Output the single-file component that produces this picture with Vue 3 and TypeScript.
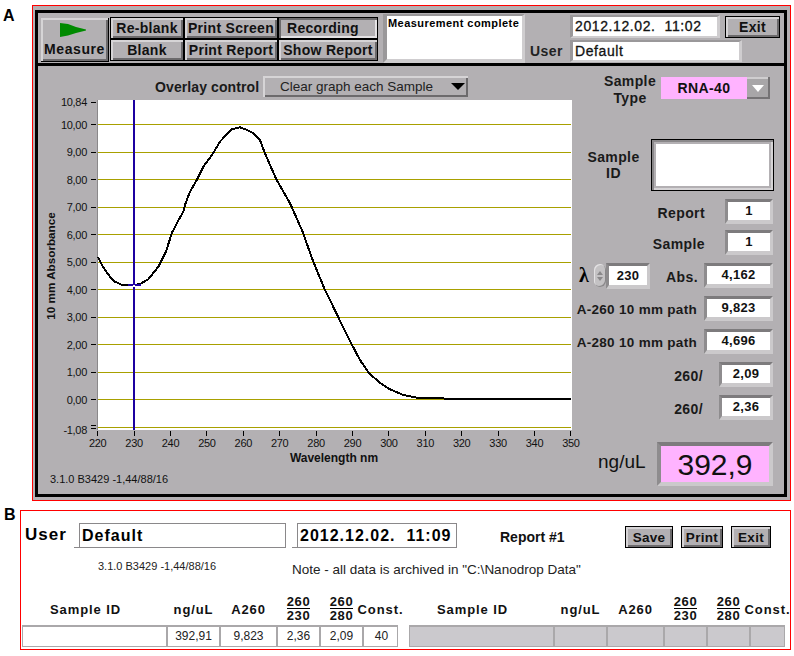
<script setup lang="ts">
import { computed } from 'vue'

// wavelength/absorbance trace, read off in page pixels
const curve: number[][] = [
  [98, 257], [102, 265], [106.7, 272.3], [111, 278], [115, 281.7], [121.7, 284.7], [133.3, 285.3], [140, 284],
  [148.3, 279.3], [158.3, 266.7], [166, 251.7], [171.7, 233.3], [178, 221], [183.3, 211.7], [185, 205], [190, 191.7],
  [196.7, 180], [203.3, 166.7], [212, 155], [220, 141.7], [226, 135], [231.7, 129.3], [240, 127.3], [247, 130],
  [253.3, 133.3], [260, 140], [265, 153.3], [270, 165], [276.7, 180], [283, 191], [290, 203.3], [297, 219],
  [303.3, 233.3], [308, 247], [313.3, 261.7], [320, 278], [325, 290], [331, 302], [338.3, 317.3], [345, 331],
  [351.7, 344.3], [360, 360], [368.3, 372.3], [376.7, 380], [383, 385], [390, 389.3], [403.3, 395], [416.7, 397.7],
  [450, 398.7], [571, 399],
]
const curvePoints = computed(() => curve.map(p => p.join(',')).join(' '))

const yAxis = [
  { y: 102, label: '10,84', tick: 102 },
  { y: 125, label: '10,00', tick: 124.5 },
  { y: 152, label: '9,00', tick: 152 },
  { y: 180, label: '8,00', tick: 179.5 },
  { y: 207, label: '7,00', tick: 207 },
  { y: 235, label: '6,00', tick: 234.5 },
  { y: 262, label: '5,00', tick: 262 },
  { y: 290, label: '4,00', tick: 289.5 },
  { y: 317, label: '3,00', tick: 317 },
  { y: 345, label: '2,00', tick: 344.5 },
  { y: 372, label: '1,00', tick: 372 },
  { y: 400, label: '0,00', tick: 399.5 },
  { y: 430, label: '-1,08', tick: 428 },
]
const gridLines = [124.5, 152, 179.5, 207, 234.5, 262, 289.5, 317, 344.5, 372, 399.5, 427.5]
const xAxis = Array.from({ length: 14 }, (_, i) => ({ x: 97.7 + i * 36.4, label: String(220 + i * 10) }))

const columns = ['Sample ID', 'ng/uL', 'A260', '260/230', '260/280', 'Const.']
const values = ['', '392,91', '9,823', '2,36', '2,09', '40']
</script>

<template>
  <div class="page">
    <div class="row-a">
      <div class="letter">A</div>
      <section class="panel-a">
        <div class="frame">
          <div class="toolbar">
            <button class="btn measure">
              <svg width="28" height="15" viewBox="0 0 28 15">
                <polygon points="0,0 8,1 16,4 26,6.5 26,7.5 16,10 8,12.500 0,14" fill="#008a00" />
              </svg>
              <span>Measure</span>
            </button>
            <div class="btn-grid">
              <button class="btn">Re-blank</button>
              <button class="btn">Print Screen</button>
              <button class="btn pressed">Recording</button>
              <button class="btn">Blank</button>
              <button class="btn">Print Report</button>
              <button class="btn">Show Report</button>
            </div>
            <div class="message"><span>Measurement complete</span></div>
            <div class="user-label">User</div>
            <div class="user-col">
              <div class="date-line">
                <div class="text-box date-box">2012.12.02.&nbsp; 11:02</div>
                <button class="btn exit">Exit</button>
              </div>
              <div class="text-box user-box">Default</div>
            </div>
          </div>

          <div class="main">
            <div class="left">
              <div class="overlay">
                <span class="label">Overlay control</span>
                <div class="dropdown">
                  <span>Clear graph each Sample</span>
                  <i class="arrow"></i>
                </div>
              </div>
              <svg class="chart" width="538" height="394" viewBox="38 100 538 394">
                <rect x="97" y="100" width="475" height="330" fill="#fff" />
                <line x1="97" y1="100" x2="97" y2="430" stroke="#8a888a" stroke-width="1" shape-rendering="crispEdges" />
                <line
                  v-for="g in gridLines"
                  :key="g"
                  x1="98"
                  :y1="g"
                  x2="571"
                  :y2="g"
                  stroke="#a8a000"
                  stroke-width="1"
                  shape-rendering="crispEdges"
                />
                <line x1="134" y1="100" x2="134" y2="430" stroke="#1c00a0" stroke-width="2" shape-rendering="crispEdges" />
                <polyline :points="curvePoints" fill="none" stroke="#000" stroke-width="2" stroke-linejoin="round" shape-rendering="crispEdges" />
                <line x1="128" y1="285" x2="141" y2="285" stroke="#1c00a0" stroke-width="2" shape-rendering="crispEdges" />
                <rect x="133" y="285" width="2" height="2" fill="#fff" />
                <g v-for="t in yAxis" :key="t.label">
                  <text class="tick-text" x="87" :y="t.y + 4" text-anchor="end">{{ t.label }}</text>
                  <line x1="91" :y1="t.tick" x2="96" :y2="t.tick" stroke="#000" stroke-width="1" shape-rendering="crispEdges" />
                </g>
                <line x1="91" y1="425.500" x2="96" y2="425.500" stroke="#000" stroke-width="1" shape-rendering="crispEdges" />
                <g v-for="t in xAxis" :key="t.label">
                  <line :x1="t.x" y1="431" :x2="t.x" y2="436" stroke="#000" stroke-width="1" shape-rendering="crispEdges" />
                  <text class="tick-text" :x="t.x" y="447" text-anchor="middle">{{ t.label }}</text>
                </g>
                <text class="axis-title x-title" x="334" y="462" text-anchor="middle">Wavelength nm</text>
                <text class="axis-title" transform="translate(55 266) rotate(-90)" text-anchor="middle">10 mm Absorbance</text>
                <text class="version" x="50" y="483">3.1.0 B3429 -1,44/88/16</text>
              </svg>
            </div>

            <div class="right">
              <div class="type-row">
                <div class="label type-label">Sample<br />Type</div>
                <div class="ring">
                  <span class="ring-value">RNA-40</span>
                  <span class="ring-arrow"><i></i></span>
                </div>
              </div>

              <div class="id-row">
                <div class="label id-label">Sample<br />ID</div>
                <div class="id-box"><div></div></div>
              </div>

              <div class="rows">
                <div class="ind-row report-row">
                  <span class="label gap-20">Report</span>
                  <div class="ind w-48">1</div>
                </div>
                <div class="ind-row">
                  <span class="label gap-20">Sample</span>
                  <div class="ind w-48">1</div>
                </div>
                <div class="ind-row lambda-row">
                  <div class="lambda">
                    <span class="lambda-sign">λ</span>
                    <div class="spinner">
                      <i class="up"></i>
                      <i class="down"></i>
                    </div>
                    <div class="ind w-44 low">230</div>
                  </div>
                  <span class="label gap-6">Abs.</span>
                  <div class="ind w-69">4,162</div>
                </div>
                <div class="ind-row">
                  <span class="label gap-7 wide">A-260 10 mm path</span>
                  <div class="ind w-69">9,823</div>
                </div>
                <div class="ind-row">
                  <span class="label gap-7 wide">A-280 10 mm path</span>
                  <div class="ind w-69">4,696</div>
                </div>
                <div class="ind-row">
                  <span class="label gap-16">260/</span>
                  <div class="ind w-54">2,09</div>
                </div>
                <div class="ind-row">
                  <span class="label gap-16">260/</span>
                  <div class="ind w-54">2,36</div>
                </div>
              </div>

              <div class="conc-row">
                <span class="conc-label">ng/uL</span>
                <div class="conc">392,9</div>
              </div>
            </div>
          </div>
        </div>
      </section>
    </div>

    <div class="row-b">
      <div class="letter-b">B</div>
      <section class="panel-b">
        <div class="report-top">
          <span class="report-user">User</span>
          <div class="field user-field"><div>Default</div></div>
          <div class="field date-field"><div>2012.12.02.&nbsp; 11:09</div></div>
          <span class="report-no">Report #1</span>
          <div class="report-btns">
            <button class="btn small save">Save</button>
            <button class="btn small print">Print</button>
            <button class="btn small close">Exit</button>
          </div>
        </div>
        <div class="notes">
          <span class="note-version">3.1.0 B3429 -1,44/88/16</span>
          <span class="note">Note - all data is archived in "C:\Nanodrop Data"</span>
        </div>
        <div class="tables">
          <div v-for="side in ['left', 'right']" :key="side" class="report-table">
            <div class="head">
              <div v-for="c in columns" :key="c" class="head-cell" :class="{ first: c === 'Sample ID' }">
                <span v-if="c.includes('/2')" class="fraction">
                  <span class="num">{{ c.split('/')[0] }}</span>
                  <span>{{ c.split('/')[1] }}</span>
                </span>
                <span v-else>{{ c }}</span>
              </div>
            </div>
            <div class="cells" :class="{ empty: side === 'right' }">
              <div v-for="(v, i) in values" :key="i" class="cell">{{ side === 'left' ? v : '' }}</div>
            </div>
          </div>
        </div>
      </section>
    </div>
  </div>
</template>

<style>
html,
body {
  margin: 0;
  background: #fff;
}
</style>

<style scoped>
.page {
  width: 794px;
  height: 656px;
  overflow: hidden;
  background: #fff;
  color: #000;
  font-family: "Liberation Sans", Arial, sans-serif;
  padding-top: 5px;
  box-sizing: border-box;
}

.row-a {
  display: flex;
}

.letter {
  width: 32px;
  padding: 2px 0 0 3px;
  box-sizing: border-box;
  font-size: 16px;
  font-weight: 700;
}

.panel-a {
  width: 759px;
  height: 496px;
  box-sizing: border-box;
  border: 1px solid #f00;
  background: #b3b0b3;
  padding: 4px 3px 3px 2px;
}

.frame {
  height: 487px;
  box-sizing: border-box;
  border: 3px solid #000;
}

.toolbar {
  height: 53px;
  box-sizing: border-box;
  border-bottom: 3px solid #000;
  display: flex;
  align-items: flex-start;
  padding-left: 3px;
}

button {
  font-family: inherit;
  padding: 0;
  margin: 0;
}

.btn {
  display: block;
  box-sizing: border-box;
  border: 1px solid #000;
  border-radius: 0;
  background: #b3b0b3;
  box-shadow: inset 2px 2px 0 #d6d4d6, inset -2px -2px 0 #6c6a6c;
  font-size: 14px;
  font-weight: 700;
  letter-spacing: 0.3px;
  color: #111;
  white-space: nowrap;
}

.btn.pressed {
  box-shadow: inset 2px 2px 0 #6c6a6c, inset -2px -2px 0 #e4e2e4;
  text-align: left;
  padding-left: 8px;
}

.measure {
  width: 68px;
  height: 44px;
  margin-top: 5px;
  margin-right: 1px;
  display: flex;
  flex-direction: column;
  align-items: center;
  border-width: 0 1px 1px 0;
  letter-spacing: 0.6px;
}

.measure svg {
  margin: 5px 0 3px;
  position: relative;
  left: -1px;
}

.btn-grid {
  display: grid;
  grid-template-columns: 74px 94px 100px;
  grid-template-rows: 22px 22px;
  margin-top: 4px;
}

.message {
  width: 142px;
  height: 49px;
  margin: 1px 0 0 5px;
  box-sizing: border-box;
  background: #fff;
  border-style: solid;
  border-width: 2px 3px 4px 4px;
  border-color: #9a989a #cfcdcf #cfcdcf #9a989a;
  font-size: 11px;
  font-weight: 700;
  letter-spacing: 0.45px;
  line-height: 14px;
  padding-left: 1px;
  white-space: nowrap;
}

.user-label {
  margin: 30px 0 0 5px;
  width: 40px;
  font-size: 14px;
  font-weight: 700;
  letter-spacing: 0.4px;
  color: #222;
  line-height: 16px;
}

.user-col {
  margin-top: 2px;
  display: flex;
  flex-direction: column;
  gap: 2px;
}

.date-line {
  display: flex;
  align-items: flex-start;
}

.text-box {
  box-sizing: border-box;
  background: #fff;
  border-style: solid;
  border-width: 2px 3px 2px 3px;
  border-color: #9a989a #cfcdcf #cfcdcf #9a989a;
  font-size: 14px;
  letter-spacing: 0.6px;
  color: #111;
  white-space: pre;
  padding-left: 2px;
  font-weight: 400;
  -webkit-text-stroke: 0.3px #111;
}

.date-box {
  width: 150px;
  height: 23px;
  line-height: 19px;
}

.user-box {
  width: 172px;
  height: 22px;
  line-height: 18px;
}

.exit {
  width: 55px;
  height: 22px;
  margin: 1px 0 0 5px;
}

.main {
  height: 428px;
  display: flex;
}

.left {
  width: 538px;
}

.label {
  font-size: 14px;
  font-weight: 700;
  letter-spacing: 0.4px;
  color: #1a1a1a;
  white-space: nowrap;
}

.overlay {
  display: flex;
  align-items: center;
  height: 21px;
  margin-top: 10px;
  margin-bottom: 3px;
  padding-left: 117px;
}

.overlay .label {
  width: 108px;
  letter-spacing: 0.1px;
}

.dropdown {
  width: 205px;
  height: 21px;
  box-sizing: border-box;
  background: #b3b0b3;
  box-shadow: inset 2px 2px 0 #d6d4d6, inset -2px -2px 0 #6c6a6c;
  display: flex;
  align-items: center;
  padding-left: 17px;
  font-size: 13.500px;
  color: #222;
  position: relative;
}

.arrow {
  position: absolute;
  right: 3px;
  top: 7px;
  width: 0;
  height: 0;
  border-left: 7.5px solid transparent;
  border-right: 7.5px solid transparent;
  border-top: 7px solid #000;
}

.chart {
  display: block;
  overflow: visible;
}

.tick-text {
  font-size: 11px;
  letter-spacing: -0.3px;
  fill: #111;
}

.axis-title {
  font-size: 11.700px;
  font-weight: 700;
  fill: #111;
}

.x-title {
  font-size: 12px;
}

.version {
  font-size: 11px;
  fill: #111;
}

.right {
  width: 208px;
}

.type-row {
  display: flex;
  height: 34px;
  margin-top: 7px;
  padding-left: 22px;
}

.type-label {
  width: 64px;
  text-align: center;
  line-height: 17px;
}

.ring {
  width: 109px;
  height: 22px;
  margin-top: 4px;
  margin-left: -1px;
  display: flex;
}

.ring-value {
  width: 86px;
  background: #ffb3ff;
  text-align: center;
  font-size: 14px;
  font-weight: 700;
  letter-spacing: 0.4px;
  line-height: 22px;
  color: #111;
}

.ring-arrow {
  flex: 1;
  background: #a8a6a8;
  box-shadow: inset -2px -2px 0 #757375, inset 0 2px 0 #cfcdcf;
  position: relative;
}

.ring-arrow i {
  position: absolute;
  left: 5px;
  top: 8px;
  width: 0;
  height: 0;
  border-left: 6px solid transparent;
  border-right: 6px solid transparent;
  border-top: 7px solid #fff;
}

.id-row {
  display: flex;
  align-items: center;
  height: 52px;
  margin-top: 32px;
}

.id-label {
  width: 75px;
  text-align: center;
  line-height: 16px;
}

.id-box {
  width: 123px;
  height: 52px;
  box-sizing: border-box;
  border: 1px solid #000;
  background: #b3b0b3;
  padding: 4px;
  box-shadow: inset 2px 2px 0 #8a888a, inset -2px -2px 0 #d6d4d6;
}

.id-box div {
  height: 100%;
  background: #fff;
}

.rows {
  margin-top: 8px;
  display: flex;
  flex-direction: column;
  gap: 8px;
}

.ind-row {
  display: flex;
  justify-content: flex-end;
  align-items: center;
  height: 25px;
  padding-right: 11px;
}

.ind-row .label {
  position: relative;
  top: 1px;
}

.report-row {
  margin-bottom: -2px;
}

.ind {
  flex-shrink: 0;
  height: 25px;
  box-sizing: border-box;
  background: #fff;
  border-style: solid;
  border-width: 3px 3px 4px 3px;
  border-color: #7d7b7d #cbc9cb #cbc9cb #8e8c8e;
  text-align: center;
  font-size: 13px;
  font-weight: 700;
  letter-spacing: 0.3px;
  line-height: 17px;
  color: #111;
}

.w-48 {
  width: 48px;
}

.w-44 {
  width: 44px;
}

.w-54 {
  width: 54px;
}

.w-69 {
  width: 69px;
}

.low {
  height: 26px;
  line-height: 19px;
}

.gap-20 {
  margin-right: 20px;
}

.gap-16 {
  margin-right: 16px;
}

.gap-7 {
  margin-right: 7px;
}

.gap-6 {
  margin-right: 6px;
}

.ind-row .wide {
  font-size: 13.500px;
  letter-spacing: 0.3px;
}

.lambda {
  margin-right: auto;
  padding-left: 3px;
  display: flex;
  align-items: center;
}

.lambda-sign {
  width: 15px;
  font-family: "Liberation Serif", serif;
  font-size: 20px;
  font-weight: 700;
}

.spinner {
  width: 12px;
  height: 23px;
  border-radius: 6px;
  background: #c4c2c4;
  box-shadow: inset -1px -1px 0 #8a888a, inset 1px 1px 0 #e4e2e4;
  display: flex;
  flex-direction: column;
  align-items: center;
  justify-content: center;
  gap: 2px;
}

.spinner i {
  width: 0;
  height: 0;
  border-left: 3px solid transparent;
  border-right: 3px solid transparent;
}

.spinner .up {
  border-bottom: 4px solid #8a888a;
}

.spinner .down {
  border-top: 4px solid #8a888a;
}

.conc-row {
  display: flex;
  align-items: center;
  margin-top: 22px;
  padding-left: 22px;
}

.conc-label {
  width: 59px;
  font-size: 19px;
  color: #111;
  position: relative;
  top: -2px;
}

.conc {
  width: 116px;
  height: 44px;
  box-sizing: border-box;
  background: #ffb3ff;
  border-style: solid;
  border-width: 4px;
  border-color: #7d7b7d #cbc9cb #cbc9cb #8e8c8e;
  text-align: center;
  font-size: 30px;
  line-height: 37px;
  color: #111;
}

.row-b {
  display: flex;
  margin-top: 9px;
}

.letter-b {
  width: 20px;
  padding: 0 0 0 4px;
  box-sizing: border-box;
  font-size: 16px;
  font-weight: 700;
  line-height: 16px;
  margin-top: -3px;
}

.panel-b {
  width: 771px;
  height: 140px;
  box-sizing: border-box;
  border: 1px solid #f00;
  position: relative;
}

.report-top {
  display: flex;
  align-items: flex-start;
  margin-top: 12px;
  padding-left: 4px;
  height: 25px;
}

.report-user {
  width: 49px;
  font-size: 17px;
  font-weight: 700;
  letter-spacing: 1px;
  line-height: 24px;
}

.field {
  box-sizing: border-box;
  height: 25px;
  padding-left: 5px;
  border-bottom: 1px solid #8a888a;
  font-size: 16px;
  font-weight: 700;
  letter-spacing: 1px;
  white-space: pre;
}

.field div {
  height: 24px;
  box-sizing: border-box;
  border: 1px solid #8a888a;
  border-bottom: 0;
  padding-left: 2px;
  line-height: 23px;
}

.user-field {
  width: 212px;
}

.date-field {
  width: 165px;
  margin-left: 6px;
}

.report-no {
  margin-left: 43px;
  width: 125px;
  font-size: 14px;
  font-weight: 700;
  line-height: 29px;
  color: #111;
}

.report-btns {
  display: flex;
  margin-top: 3px;
}

.small {
  height: 22px;
  font-size: 13.500px;
}

.save {
  width: 48px;
}

.print {
  width: 42px;
  margin-left: 8px;
}

.close {
  width: 40px;
  margin-left: 8px;
}

.notes {
  display: flex;
  height: 47px;
  padding-left: 77px;
  color: #222;
}

.note-version {
  width: 194px;
  margin-top: 11px;
  font-size: 11px;
  line-height: 14px;
  white-space: nowrap;
}

.note {
  margin-top: 14px;
  font-size: 13.500px;
  line-height: 16px;
  white-space: nowrap;
}

.tables {
  display: flex;
  gap: 11px;
  padding-left: 1px;
}

.report-table {
  width: 376px;
}

.head,
.cells {
  display: grid;
  grid-template-columns: 145px 53px 57px 43px 43px 35px;
}

.head {
  height: 28px;
}

.head-cell {
  display: flex;
  align-items: center;
  justify-content: center;
  font-size: 13px;
  font-weight: 700;
  letter-spacing: 0.9px;
  white-space: nowrap;
  color: #111;
  min-width: 0;
}

.head-cell.first {
  padding-right: 18px;
}

.fraction {
  display: flex;
  flex-direction: column;
  align-items: center;
  line-height: 14px;
  font-size: 13px;
  letter-spacing: 0.6px;
}

.num {
  border-bottom: 1px solid #000;
  line-height: 13px;
}

.cells {
  height: 22px;
  margin-top: 2px;
  box-sizing: border-box;
  border: 1px solid #aaa8aa;
  border-top-width: 2px;
}

.cell {
  border-right: 2px solid #aaa8aa;
  text-align: center;
  font-size: 12px;
  line-height: 19px;
  color: #222;
}

.cell:last-child {
  border-right: 0;
}

.cells.empty {
  background: #cbc9cd;
}
</style>
